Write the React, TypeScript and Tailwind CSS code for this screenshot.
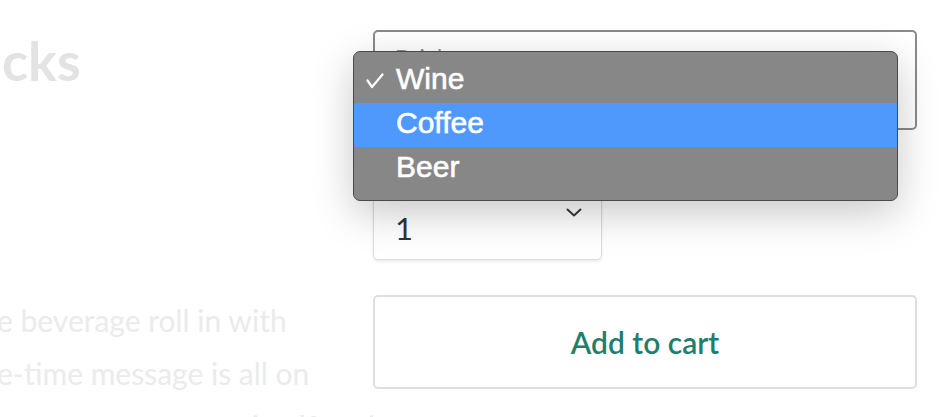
import React from 'react';

const OPTIONS = ['Wine', 'Coffee', 'Beer'];

const Check: React.FC = () => (
  <svg width="18" height="16" viewBox="0 0 18 16" fill="none" className="absolute left-[12px] top-[14px]">
    <path d="M1.5 7.5 L6 14 L16.5 1.5" stroke="white" strokeWidth="2.2" strokeLinecap="round" strokeLinejoin="round" />
  </svg>
);

const App: React.FC = () => {
  const selected = 'Wine';
  const highlighted = 'Coffee';

  return (
    <div className="relative w-[949px] h-[417px] overflow-hidden bg-white font-['Lato',sans-serif]">
      <div className="flex">
        {/* product copy, cropped at the left edge */}
        <div className="w-[373px] shrink-0 overflow-hidden">
          <h1 className="mt-[34px] ml-[2px] text-[54px] leading-none font-bold text-[#e3e3e3] whitespace-nowrap">
            cks
          </h1>
          <div className="mt-[206px] -ml-[3px] text-[30px] leading-[53px] text-[#ebebeb] whitespace-nowrap">
            <p>e beverage roll in with</p>
            <p>e-time message is all on</p>
            <p>r moment presents itself until the last</p>
          </div>
        </div>

        {/* form */}
        <div className="w-[544px] shrink-0 pt-[30px]">
          <div className="h-[100px] border-2 border-[#8a8a8a] rounded-[5px] px-[20px] pt-[12px]">
            <div className="text-[22px] leading-[26px] text-[#8d8d8d]">Drinks</div>
            <div className="mt-[14px] text-[30px] leading-[36px] text-[#333]">{selected}</div>
          </div>

          <div className="relative mt-[30px] w-[229px] h-[100px] border border-[#dcdcdc] rounded-[5px] px-[21px] pt-[14px] shadow-[0_2px_3px_rgba(0,0,0,0.08)]">
            <div className="text-[22px] leading-[26px] text-[#8d8d8d]">Quantity</div>
            <div className="mt-[9px] text-[31px] leading-[36px] text-[#333]">1</div>
            <svg width="16" height="9" viewBox="0 0 16 9" fill="none" className="absolute right-[19px] top-[47px]">
              <path d="M1.5 1.5 L8 7.5 L14.5 1.5" stroke="#3a3a3a" strokeWidth="2" strokeLinecap="round" strokeLinejoin="round" />
            </svg>
          </div>

          <button className="mt-[35px] w-full h-[94px] border-2 border-[#dedede] rounded-[5px] text-[30px] font-semibold text-[#1e7f6c]">
            Add to cart
          </button>
        </div>
      </div>

      {/* open native select popup */}
      <div className="absolute left-[353px] top-[51px] w-[545px] h-[150px] bg-[#878787] border border-[#4a4a4a] rounded-[7px] py-[7px] shadow-[0_12px_40px_rgba(0,0,0,0.22)] font-['Liberation_Sans',sans-serif]">
        {OPTIONS.map((opt) => (
          <div
            key={opt}
            className={`relative h-[44px] pl-[42px] text-[30px] leading-[40px] text-white [-webkit-text-stroke:0.6px_#ffffff] ${opt === highlighted ? 'bg-[#4f99fd]' : ''}`}
          >
            {opt === selected && <Check />}
            {opt}
          </div>
        ))}
      </div>
    </div>
  );
};

export default App;
